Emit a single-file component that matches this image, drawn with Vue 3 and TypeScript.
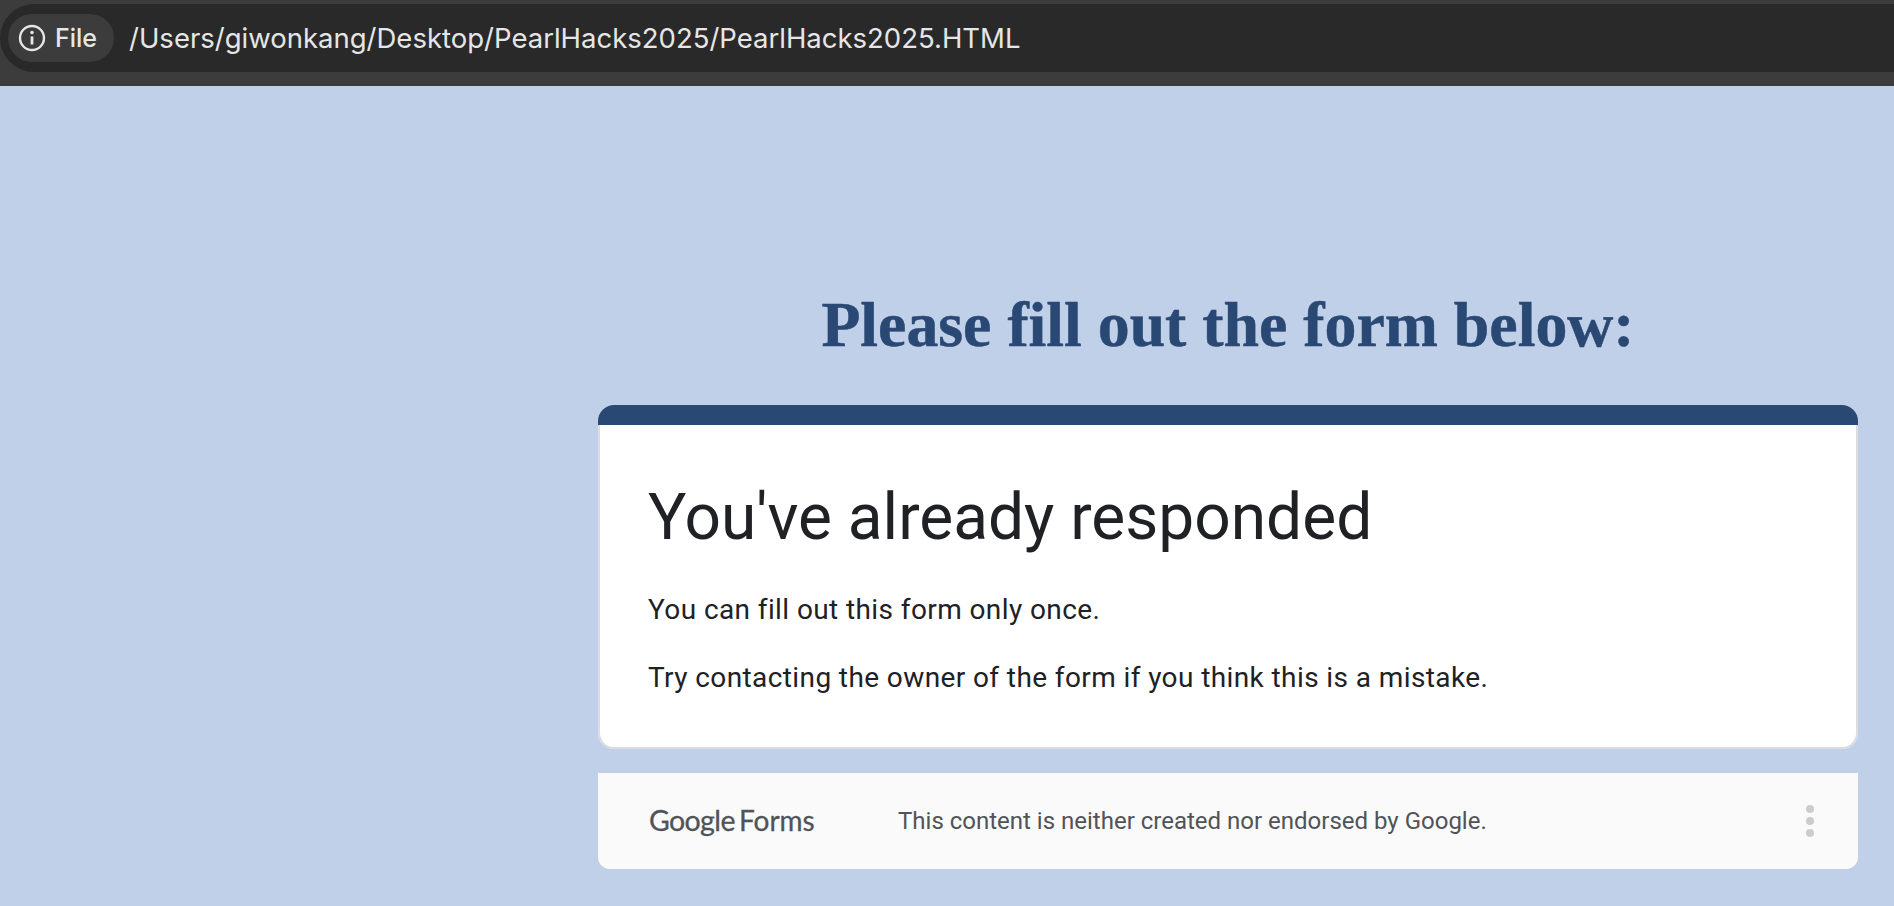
<script setup lang="ts">
const path: string = '/Users/giwonkang/Desktop/PearlHacks2025/PearlHacks2025.HTML'
</script>

<template>
  <div class="page">
    <header class="bar">
      <div class="omnibox">
        <div class="chip">
          <svg class="info" width="28" height="28" viewBox="0 0 28 28" fill="none" stroke="#e6e6e6" stroke-width="2.4">
            <circle cx="14" cy="14" r="12" />
            <path d="M14 12.5v8" stroke-width="2.8" />
            <circle cx="14" cy="8.5" r="1.8" fill="#e6e6e6" stroke="none" />
          </svg>
          <span>File</span>
        </div>
        <span class="url">{{ path }}</span>
      </div>
    </header>
    <main class="main">
      <h1 class="heading">Please fill out the form below:</h1>
      <section class="card">
        <div class="accent"></div>
        <div class="body">
          <h2 class="title">You've already responded</h2>
          <p class="line first">You can fill out this form only once.</p>
          <p class="line">Try contacting the owner of the form if you think this is a mistake.</p>
        </div>
      </section>
      <footer class="foot">
        <div class="logo"><span class="google">Google</span><span class="forms">Forms</span></div>
        <span class="note">This content is neither created nor endorsed by Google.</span>
        <div class="dots"><i></i><i></i><i></i></div>
      </footer>
    </main>
  </div>
</template>

<style>
html, body { margin: 0; background: #c0d0e9; overflow: hidden; }
</style>

<style scoped>
.page { width: 1894px; height: 906px; background: #c0d0e9; overflow: hidden; display: flex; flex-direction: column; }
.bar { height: 86px; box-sizing: border-box; padding-top: 4px; background: #3c3c3c; flex: none; }
.omnibox { height: 68px; background: #292929; border-radius: 34px 0 0 34px; display: flex; align-items: center; padding-left: 8px; }
.chip { width: 106px; height: 48px; border-radius: 24px; background: #3c3c3c; display: flex; align-items: center; padding-left: 10px; box-sizing: border-box; gap: 9px; color: #e6e6e6; font: 500 25px Inter, sans-serif; }
.info { flex: none; }
.url { margin-left: 15px; color: #e6e6e6; font: 400 27.5px Inter, sans-serif; white-space: nowrap; }
.main { padding: 0 36px 0 598px; display: flex; flex-direction: column; }
.heading { margin: 196px 0 0; height: 123px; text-align: center; font: bold 63.8px/86px "Liberation Serif", serif; color: #2a4874; -webkit-text-stroke: 0.5px #2a4874; }
.card { background: #fff; border-radius: 16px; overflow: hidden; box-shadow: inset 0 0 0 2px #dadce0; }
.accent { height: 20px; background: #2a4874; }
.body { padding: 55px 50px 30px; height: 324px; box-sizing: border-box; }
.title { margin: 0; font: 400 64px/76px Roboto, sans-serif; color: #202124; }
.line { margin: 0; font: 400 28px/36px Roboto, sans-serif; letter-spacing: 0.4px; color: #202124; }
.first { margin: 36px 0 32px; }
.foot { margin-top: 24px; height: 96px; background: #fafafa; border-radius: 0 0 12px 12px; display: flex; align-items: center; padding: 0 44px 0 51px; }
.logo { width: 249px; flex: none; color: #505357; display: flex; align-items: baseline; margin-top: -2px; -webkit-text-stroke: 0.3px #505357; }
.google { font: 400 28.5px Lato, sans-serif; letter-spacing: -0.6px; }
.forms { font: 400 28px Lato, sans-serif; margin-left: 4px; }
.note { font: 400 24px Roboto, sans-serif; color: #505357; white-space: nowrap; }
.dots { margin-left: auto; display: flex; flex-direction: column; gap: 4px; }
.dots i { display: block; width: 8px; height: 8px; border-radius: 50%; background: #ccc; }
</style>
